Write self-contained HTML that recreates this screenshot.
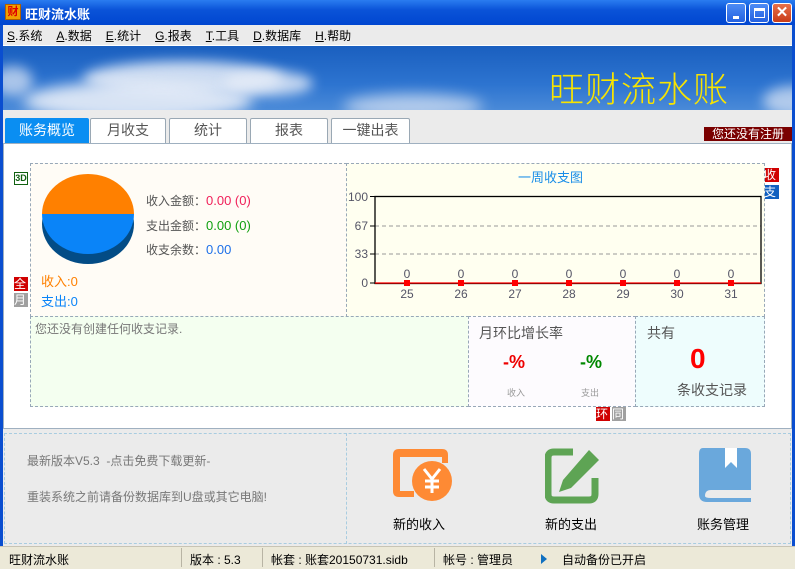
<!DOCTYPE html>
<html><head><meta charset="utf-8">
<style>
*{margin:0;padding:0;box-sizing:border-box}
body{width:795px;height:569px;overflow:hidden;position:relative;background:#ebebeb;font-family:"Liberation Sans","Noto Sans CJK SC","WenQuanYi Zen Hei",sans-serif;font-size:12px;color:#333}
.a{position:absolute}
.title{left:0;top:0;width:795px;height:25px;background:linear-gradient(#2a7cf0,#0a53d8 40%,#0046d0);color:#fff;font-weight:bold;font-size:13px}
.btn{top:3px;width:20px;height:20px;border:1px solid #fff;border-radius:3px;background:linear-gradient(#4d8cf5,#2461e0)}
.menu span{margin-right:14px}
.tab{top:118px;height:25px;border:1px solid #9aa8b4;border-bottom:none;background:#fff;text-align:center;line-height:23px;font-size:14px;color:#555;border-radius:2px 2px 0 0}
.dash{border:1px dashed #98a8b8}
.num{font-size:13px}
</style></head><body>
<div class="a" style="left:0;top:0;width:3px;height:569px;background:#0a4ed0"></div>
<div class="a" style="left:792px;top:0;width:3px;height:569px;background:#0a4ed0"></div>
<div class="a title">
 <div class="a" style="left:5px;top:4px;width:16px;height:16px;background:#f0a000;border:1px solid #b06000;color:#d00;font-size:11px;line-height:14px;text-align:center">财</div>
 <div class="a" style="left:25px;top:4px">旺财流水账</div>
 <div class="a btn" style="left:726px"><div class="a" style="left:6px;top:12px;width:6px;height:3px;background:#fff"></div></div>
 <div class="a btn" style="left:749px"><div class="a" style="left:4px;top:4px;width:11px;height:10px;border:1px solid #fff;border-top-width:3px"></div></div>
 <div class="a btn" style="left:772px;background:linear-gradient(#e8704a,#c83c18);color:#fff;font-size:15px;text-align:center;line-height:18px">✕</div>
</div>
<div class="a menu" style="left:7px;top:27px;font-size:12px;color:#000;white-space:nowrap"><span><u>S</u>.系统</span><span><u>A</u>.数据</span><span><u>E</u>.统计</span><span><u>G</u>.报表</span><span><u>T</u>.工具</span><span><u>D</u>.数据库</span><span><u>H</u>.帮助</span></div>
<div class="a" style="left:3px;top:45px;width:789px;height:1px;background:#fff"></div>
<div class="a" style="left:3px;top:46px;width:789px;height:64px;background:linear-gradient(180deg,#1a5fbf,#2d74d0 60%,#4a8ad8);overflow:hidden">
 <div class="a" style="left:80px;top:15px;width:200px;height:35px;background:#e8eef8;border-radius:50%;filter:blur(6px);opacity:.85"></div>
 <div class="a" style="left:20px;top:35px;width:230px;height:40px;background:#e8eef8;border-radius:50%;filter:blur(7px);opacity:.9"></div>
 <div class="a" style="left:220px;top:25px;width:90px;height:25px;background:#e8eef8;border-radius:50%;filter:blur(6px);opacity:.8"></div>
 <div class="a" style="left:340px;top:48px;width:140px;height:25px;background:#e0e8f5;border-radius:50%;filter:blur(7px);opacity:.7"></div>
 <div class="a" style="left:-10px;top:20px;width:40px;height:30px;background:#e0e8f5;border-radius:50%;filter:blur(6px);opacity:.7"></div>
 <div class="a" style="left:760px;top:40px;width:60px;height:30px;background:#e0e8f5;border-radius:50%;filter:blur(6px);opacity:.7"></div>
 <div class="a" style="left:546px;top:16px;color:#f8e400;font-size:35px;letter-spacing:1px;font-weight:300">旺财流水账</div>
</div>
<div class="a tab" style="left:5px;width:84px;background:#0a8ef2;color:#fff;border-color:#0a8ef2">账务概览</div>
<div class="a tab" style="left:90px;width:76px">月收支</div>
<div class="a tab" style="left:169px;width:78px">统计</div>
<div class="a tab" style="left:250px;width:78px">报表</div>
<div class="a tab" style="left:331px;width:79px">一键出表</div>
<div class="a" style="left:704px;top:127px;width:88px;height:14px;background:#7a0000;color:#fff;font-size:12px;line-height:14px;text-align:center">您还没有注册</div>
<div class="a" style="left:3px;top:143px;width:789px;height:286px;background:#fff;border:1px solid #9fb0c0"></div>
<!-- left markers -->
<div class="a" style="left:14px;top:172px;width:14px;height:13px;border:1px solid #106010;color:#106010;font-size:9px;font-weight:bold;line-height:11px;text-align:center">3D</div>
<div class="a" style="left:14px;top:277px;width:14px;height:14px;background:#d00000;color:#fff;font-size:12px;line-height:14px">全</div>
<div class="a" style="left:14px;top:293px;width:14px;height:14px;background:#a0a0a0;color:#fff;font-size:12px;line-height:14px">月</div>
<div class="a" style="left:764px;top:168px;width:15px;height:14px;background:#d00000;color:#fff;font-size:12px;line-height:14px">收</div>
<div class="a" style="left:764px;top:185px;width:15px;height:14px;background:#1060c0;color:#fff;font-size:12px;line-height:14px">支</div>
<div class="a" style="left:596px;top:407px;width:14px;height:14px;background:#d00000;color:#fff;font-size:12px;line-height:14px">环</div>
<div class="a" style="left:612px;top:407px;width:14px;height:14px;background:#a0a0a0;color:#fff;font-size:12px;line-height:14px">同</div>
<!-- cells -->
<div class="a dash" style="left:30px;top:163px;width:317px;height:154px;background:#fffcf6"></div>
<div class="a dash" style="left:346px;top:163px;width:419px;height:154px;background:#fffff0"></div>
<div class="a dash" style="left:30px;top:316px;width:439px;height:91px;background:#f4fff0"></div>
<div class="a dash" style="left:468px;top:316px;width:168px;height:91px;background:#fdfbfe"></div>
<div class="a dash" style="left:635px;top:316px;width:130px;height:91px;background:#eefdfd"></div>
<!-- pie -->
<svg class="a" style="left:40px;top:172px" width="98" height="96">
<ellipse cx="48" cy="52" rx="46" ry="40" fill="#034c86"/>
<path d="M2 42 A46 40 0 0 1 94 42 Z" fill="#ff8000"/>
<path d="M2 42 L94 42 A46 40 0 0 1 2 42 Z" fill="#0a84f8"/>
</svg>
<div class="a" style="left:146px;top:192px;color:#555">收入金额：<span class="num" style="color:#f0205a">0.00 (0)</span></div>
<div class="a" style="left:146px;top:217px;color:#555">支出金额：<span class="num" style="color:#10a010">0.00 (0)</span></div>
<div class="a" style="left:146px;top:241px;color:#555">收支余数：<span class="num" style="color:#1e70e8">0.00</span></div>
<div class="a" style="left:41px;top:271px;color:#ff8000;font-size:13px">收入:0</div>
<div class="a" style="left:41px;top:291px;color:#0a84f8;font-size:13px">支出:0</div>
<!-- chart -->
<div class="a" style="left:518px;top:167px;color:#1a8ee8;font-size:13px">一周收支图</div>
<svg class="a" style="left:346px;top:185px" width="419" height="120" font-family="Liberation Sans" font-size="12" fill="#556">
<line x1="29" y1="69" x2="415" y2="69" stroke="#999" stroke-dasharray="4,3"/>
<line x1="29" y1="41" x2="415" y2="41" stroke="#999" stroke-dasharray="4,3"/>
<rect x="29" y="11.5" width="386" height="87" fill="none" stroke="#000" stroke-width="1.3"/>
<line x1="29" y1="98" x2="415" y2="98" stroke="#f00" stroke-width="1.2"/>
<g stroke="#000"><line x1="24" y1="11.5" x2="29" y2="11.5"/><line x1="24" y1="41" x2="29" y2="41"/><line x1="24" y1="69" x2="29" y2="69"/><line x1="24" y1="98" x2="29" y2="98"/></g>
<text x="22" y="16" text-anchor="end">100</text><text x="22" y="45" text-anchor="end">67</text><text x="22" y="73" text-anchor="end">33</text><text x="22" y="102" text-anchor="end">0</text>
<g text-anchor="middle">
<text x="61" y="93">0</text><text x="115" y="93">0</text><text x="169" y="93">0</text><text x="223" y="93">0</text><text x="277" y="93">0</text><text x="331" y="93">0</text><text x="385" y="93">0</text>
<text x="61" y="113">25</text><text x="115" y="113">26</text><text x="169" y="113">27</text><text x="223" y="113">28</text><text x="277" y="113">29</text><text x="331" y="113">30</text><text x="385" y="113">31</text>
</g>
<g fill="#f00"><rect x="58" y="95" width="6" height="6"/><rect x="112" y="95" width="6" height="6"/><rect x="166" y="95" width="6" height="6"/><rect x="220" y="95" width="6" height="6"/><rect x="274" y="95" width="6" height="6"/><rect x="328" y="95" width="6" height="6"/><rect x="382" y="95" width="6" height="6"/></g>
</svg>
<div class="a" style="left:35px;top:320px;color:#777">您还没有创建任何收支记录.</div>
<div class="a" style="left:479px;top:323px;color:#555;font-size:14px">月环比增长率</div>
<div class="a" style="left:503px;top:352px;color:#e00;font-size:18px;font-weight:bold">-%</div>
<div class="a" style="left:580px;top:352px;color:#080;font-size:18px;font-weight:bold">-%</div>
<div class="a" style="left:507px;top:386px;color:#999;font-size:9px">收入</div>
<div class="a" style="left:581px;top:386px;color:#999;font-size:9px">支出</div>
<div class="a" style="left:647px;top:323px;color:#555;font-size:14px">共有</div>
<div class="a" style="left:690px;top:343px;color:#f00;font-size:28px;font-weight:bold">0</div>
<div class="a" style="left:677px;top:380px;color:#555;font-size:14px">条收支记录</div>
<!-- bottom -->
<div class="a" style="left:4px;top:433px;width:787px;height:111px;border:1px dashed #a8cce0"></div>
<div class="a" style="left:346px;top:433px;width:1px;height:111px;border-left:1px dashed #a8cce0"></div>
<div class="a" style="left:27px;top:452px;color:#777">最新版本V5.3 &nbsp;-点击免费下载更新-</div>
<div class="a" style="left:27px;top:488px;color:#777">重装系统之前请备份数据库到U盘或其它电脑!</div>
<svg class="a" style="left:390px;top:447px" width="62" height="54">
<path d="M3 8 Q3 2 9 2 H52 Q58 2 58 8 V16 H52 V10 H10 V44 H24 V50 H9 Q3 50 3 44 Z" fill="#fe8a34"/>
<circle cx="42" cy="34" r="20" fill="#fe8a34"/>
<g stroke="#fff" stroke-width="3" fill="none"><path d="M34 22 L42 32 L50 22"/><path d="M42 32 V46"/><path d="M35 34 H49"/><path d="M35 40 H49"/></g>
</svg>
<svg class="a" style="left:545px;top:448px" width="56" height="56">
<path d="M28 4 H9 Q3 4 3 10 V46 Q3 52 9 52 H44 Q50 52 50 46 V30" fill="none" stroke="#5ea454" stroke-width="7"/>
<path d="M44 2 L54 12 L26 40 L14 44 L18 32 Z" fill="#5ea454"/>
</svg>
<svg class="a" style="left:697px;top:446px" width="56" height="58">
<path d="M6 2 H48 Q54 2 54 8 V44 H14 Q8 44 8 50 Q8 52 14 52 H54 V56 H10 Q2 56 2 48 V8 Q2 2 6 2 Z" fill="#6aa8dc"/>
<path d="M28 2 H40 V22 L34 16 L28 22 Z" fill="#fff"/>
</svg>
<div class="a" style="left:393px;top:514px;color:#000;font-size:13px">新的收入</div>
<div class="a" style="left:545px;top:514px;color:#000;font-size:13px">新的支出</div>
<div class="a" style="left:697px;top:514px;color:#000;font-size:13px">账务管理</div>
<!-- status -->
<div class="a" style="left:0;top:546px;width:795px;height:23px;background:#ece9d8;border-top:1px solid #c8c4b4"></div>
<div class="a" style="left:9px;top:551px;color:#000">旺财流水账</div>
<div class="a" style="left:181px;top:548px;width:1px;height:19px;background:#b8b4a4"></div>
<div class="a" style="left:190px;top:551px;color:#000">版本 : 5.3</div>
<div class="a" style="left:262px;top:548px;width:1px;height:19px;background:#b8b4a4"></div>
<div class="a" style="left:271px;top:551px;color:#000">帐套 : 账套20150731.sidb</div>
<div class="a" style="left:434px;top:548px;width:1px;height:19px;background:#b8b4a4"></div>
<div class="a" style="left:443px;top:551px;color:#000">帐号 : 管理员</div>
<div class="a" style="left:541px;top:554px;width:0;height:0;border-left:6px solid #1070c0;border-top:5px solid transparent;border-bottom:5px solid transparent"></div>
<div class="a" style="left:562px;top:551px;color:#000">自动备份已开启</div>
</body></html>
